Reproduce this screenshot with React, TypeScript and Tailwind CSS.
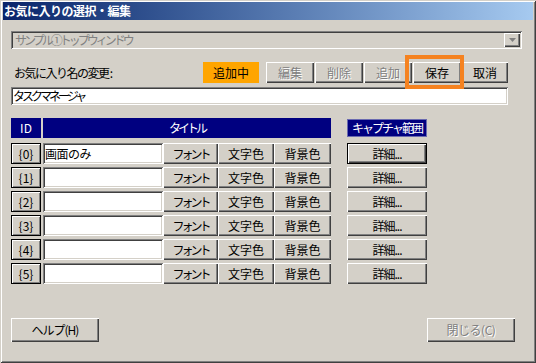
import React from "react";

const font = { fontFamily: '"Noto Sans CJK JP", "Noto Sans", sans-serif' };

const raised =
  "bg-[#d4d0c8] shadow-[inset_1px_1px_0_#ffffff,inset_-1px_-1px_0_#404040,inset_-2px_-2px_0_#808080]";
const sunken =
  "shadow-[inset_1px_1px_0_#808080,inset_-1px_-1px_0_#ffffff,inset_2px_2px_0_#404040,inset_-2px_-2px_0_#d4d0c8]";

function Btn({
  label,
  w,
  h = "h-[21px]",
  disabled = false,
  extra = "",
  track = "",
}: {
  label: string;
  w: string;
  h?: string;
  disabled?: boolean;
  extra?: string;
  track?: string;
}) {
  return (
    <div
      className={`${raised} ${w} ${h} ${extra} flex shrink-0 items-center justify-center text-[12px] leading-none ${
        disabled ? "text-[#808080] [text-shadow:1px_1px_0_#ffffff]" : "text-black"
      }`}
    >
      <span className={`whitespace-nowrap ${track}`}>{label}</span>
    </div>
  );
}

const ids = [0, 1, 2, 3, 4, 5];

export default function App() {
  return (
    <div
      style={font}
      className="relative flex h-[363px] w-[536px] flex-col bg-[#d4d0c8] px-[3px] pt-[2px] shadow-[inset_1px_1px_0_#d4d0c8,inset_-1px_-1px_0_#404040,inset_2px_2px_0_#ffffff,inset_-2px_-2px_0_#808080]"
    >
      {/* Title bar */}
      <div className="flex h-[18px] items-center bg-gradient-to-r from-[#0a246a] to-[#a6caf0] pl-[1px] text-[12px] font-bold leading-none tracking-[-0.5px] text-white">
        お気に入りの選択・編集
      </div>

      <div className="flex flex-col pl-[8px]">
        {/* Window combo */}
        <div className={`mt-[11px] flex h-[18px] w-[511px] items-center justify-between bg-[#d4d0c8] pl-[4px] pr-[2px] ${sunken}`}>
          <span className="text-[12px] leading-none tracking-[-3px] text-[#808080]">サンプル①トップウィンドウ</span>
          <div className={`${raised} flex h-[14px] w-[16px] items-center justify-center`}>
            <svg width="7" height="4" viewBox="0 0 7 4">
              <path d="M0 0h7L3.5 4z" fill="#808080" />
            </svg>
          </div>
        </div>

        {/* Name edit row */}
        <div className="mt-[13px] flex h-[21px] items-center">
          <span className="ml-[3px] w-[189px] whitespace-nowrap text-[12px] leading-none tracking-[-1.5px] text-black">
            お気に入り名の変更 :
          </span>
          <div className="flex h-[21px] w-[56px] items-center justify-center bg-[#ffa500] text-[12px] leading-none text-black">
            追加中
          </div>
          <div className="ml-[7px] flex gap-[1px]">
            <Btn label="編集" w="w-[48px]" disabled />
            <Btn label="削除" w="w-[48px]" disabled />
            <Btn label="追加" w="w-[48px]" disabled />
            <Btn label="保存" w="w-[48px]" />
            <Btn label="取消" w="w-[46px]" />
          </div>
        </div>

        <div className={`mt-[4px] flex h-[18px] w-[497px] items-center bg-white pl-[2px] text-[12px] leading-none tracking-[-3px] text-black ${sunken}`}>
          タスクマネージャ
        </div>

        {/* Table header */}
        <div className="mt-[13px] flex h-[20px] items-center">
          <div className="flex h-[20px] w-[30px] items-center justify-center bg-[#000080] text-[12px] leading-none text-white">
            ID
          </div>
          <div className="ml-[2px] flex h-[20px] w-[288px] items-center justify-center bg-[#000080] text-[12px] leading-none tracking-[-3px] text-white">
            タイトル
          </div>
          <div className="ml-[16px] flex h-[18px] w-[80px] items-center justify-center whitespace-nowrap border border-[#6a6ab0] bg-[#000080] text-[12px] leading-none tracking-[-2px] text-white">
            キャプチャ範囲
          </div>
        </div>

        {/* Rows */}
        <div className="mt-[5px] flex flex-col gap-[3px]">
          {ids.map((i) => (
            <div key={i} className="flex h-[21px] items-center">
              <div className="flex h-[21px] w-[30px] items-center justify-center border border-black bg-[#d4d0c8] text-[12px] leading-none text-black shadow-[inset_1px_1px_0_#ffffff,inset_-1px_-1px_0_#808080]">
                {`{${i}}`}
              </div>
              <div className={`ml-[2px] flex h-[21px] w-[120px] items-center bg-white pl-[2px] text-[12px] leading-none tracking-[-0.5px] text-black ${sunken}`}>
                {i === 0 ? "画面のみ" : ""}
              </div>
              <Btn label="フォント" w="w-[55px]" track="tracking-[-3px]" />
              <Btn label="文字色" w="w-[56px]" />
              <Btn label="背景色" w="w-[57px]" />
              <Btn
                label="詳細..."
                w="w-[80px]"
                track="tracking-[-1px]"
                extra={
                  i === 0
                    ? "ml-[16px] outline outline-1 outline-black -outline-offset-1 shadow-[inset_2px_2px_0_#ffffff,inset_-2px_-2px_0_#404040,inset_-3px_-3px_0_#808080]"
                    : "ml-[16px]"
                }
              />
            </div>
          ))}
        </div>

        {/* Bottom buttons */}
        <div className="mt-[34px] flex w-[504px] items-center justify-between">
          <Btn label="ヘルプ(H)" w="w-[88px]" h="h-[24px]" track="tracking-[-1px]" />
          <Btn label="閉じる(C)" w="w-[88px]" h="h-[24px]" track="tracking-[-0.5px]" disabled />
        </div>
      </div>

      {/* Orange highlight around 保存 */}
      <div className="pointer-events-none absolute left-[405px] top-[55px] h-[34px] w-[59px] border-[4px] border-[#f58220]" />
    </div>
  );
}
